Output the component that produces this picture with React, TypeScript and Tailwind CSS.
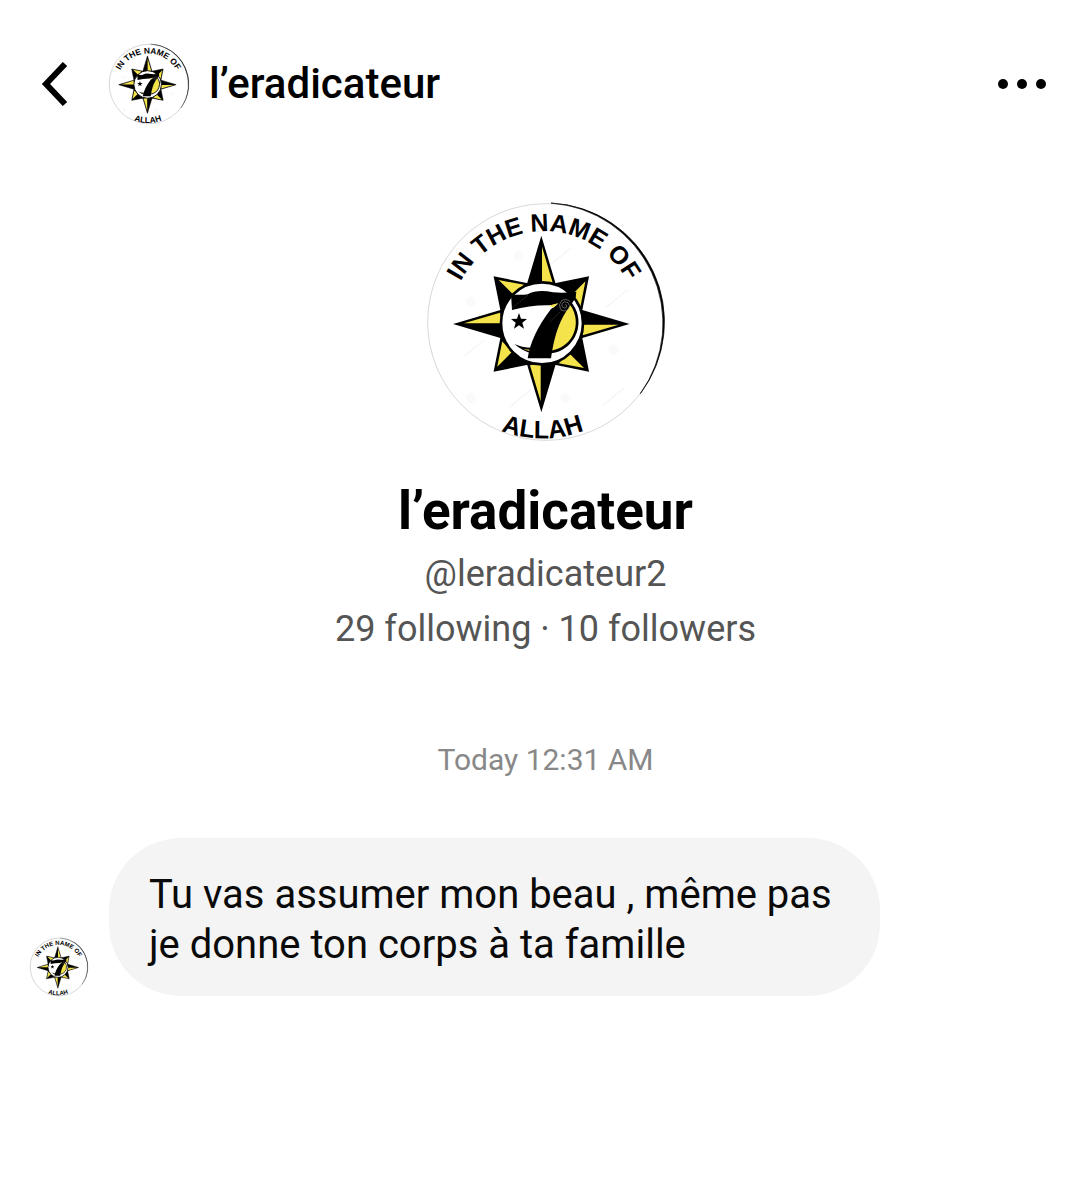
import React, { useId } from 'react';

const CARDINALS = [0, 90, 180, 270];
const DIAGONALS = [45, 135, 225, 315];

const WATERMARKS = [
  [420, 185],
  [160, 460],
  [590, 310],
  [300, 610],
  [580, 605],
];

interface AvatarProps {
  className: string;
}

const Avatar: React.FC<AvatarProps> = ({ className }) => {
  const id = useId();

  return (
    <svg viewBox="20 24 714 714" className={`overflow-visible ${className}`} role="img" aria-label="l’eradicateur">
      <defs>
        <path id={`${id}-top`} d="M88 392 A283 283 0 0 1 654 392" />
        <path id={`${id}-bottom`} d="M21 384 A346 346 0 0 0 713 384" />
      </defs>
      <circle cx="377" cy="381" r="355" fill="#fff" stroke="#d8d8d8" vectorEffect="non-scaling-stroke" />
      {/* Dark rim on the right */}
      <path d="M392 24 A357 357 0 0 1 660 596 A362 362 0 0 0 392 24Z" fill="#000" stroke="#000" strokeWidth="2" />

      {WATERMARKS.map(([x, y]) => (
        <path
          key={`${x}-${y}`}
          d={`M${x - 32} ${y + 26} L${x + 32} ${y - 26}`}
          stroke="#f5f5f5"
          strokeWidth="4"
        />
      ))}
      <g fill="#fafafa">
        <circle cx="295" cy="183" r="15" />
        <circle cx="152" cy="320" r="15" />
        <circle cx="152" cy="610" r="15" />
        <circle cx="435" cy="610" r="15" />
        <circle cx="580" cy="465" r="15" />
      </g>

      {/* Compass star */}
      <g transform="translate(363 387)" stroke="#000" strokeWidth="5">
        {DIAGONALS.map(deg => (
          <g key={deg} transform={`rotate(${deg})`}>
            <path d="M0 -198 L62 -105 L-62 -105Z" />
            <path d="M3 -184 L46 -120 L3 -120Z" fill="#f5e34c" stroke="none" />
          </g>
        ))}
        {CARDINALS.map(deg => (
          <g key={deg} transform={`rotate(${deg})`}>
            <path d="M0 -256 L45 -105 L-45 -105Z" />
            <path d="M2 -232 L34 -124 L2 -118Z" fill="#f5e34c" stroke="none" />
          </g>
        ))}
      </g>
      <circle cx="365" cy="385" r="123" fill="#fff" stroke="#000" strokeWidth="8" />

      {/* Crescent */}
      <path d="M424 322 L446 320 A88 88 0 0 1 394 468 L350 468Z" fill="#f5e34c" />
      <path d="M446 320 A90 90 0 0 1 392 471" fill="none" stroke="#000" strokeWidth="8" />
      <path d="M282 447 Q306 459 340 458 L338 476 Q308 470 282 447Z" />
      <path d="M308 463 L332 464 L330 469Z" fill="#f5e34c" />

      {/* Seven */}
      <path d="M272 296 Q296 302 322 298 Q352 282 398 292 Q432 295 468 290 L466 308 Q450 332 437 350 Q404 400 392 490 L322 490 Q332 420 392 342 L412 328 L386 331 Q330 330 275 345Z" />
      <path d="M386 332 L414 324 L400 338Z" fill="#f5e34c" />
      <path d="M296 354 L302 371 L320 372 L306 383 L311 401 L296 391 L281 401 L286 383 L272 372 L290 371Z" />

      <path
        d="M433 331 q4 -5 7 1 q0 8 -9 7 q-9 -3 -6 -13 q6 -10 18 -3 q9 9 1 20 q-12 10 -24 -1 q-7 -14 4 -25 q14 -8 25 3"
        fill="none"
        stroke="#8a8a8a"
        strokeWidth="2"
      />
      <path d="M277 338 L322 301 M390 380 L424 345" stroke="#555" strokeWidth="2" strokeDasharray="5 4" />

      <g className="font-['Liberation_Sans',Arial,sans-serif] font-bold" fontSize="75" textAnchor="middle">
        <text>
          <textPath href={`#${id}-top`} startOffset="50%">IN THE NAME OF</textPath>
        </text>
        <text>
          <textPath href={`#${id}-bottom`} startOffset="50%">ALLAH</textPath>
        </text>
      </g>
    </svg>
  );
};

const Header: React.FC = () => (
  <header className="flex items-center pt-11 pr-11 pl-10">
    <button type="button" aria-label="Back" className="shrink-0">
      <svg viewBox="0 0 28 44" className="h-11 w-7" fill="none" stroke="#000" strokeWidth="6">
        <path d="M25 2 L6 22 L25 42" />
      </svg>
    </button>
    <Avatar className="ml-[41px] size-20 shrink-0" />
    <h1 className="ml-5 text-[42px] leading-[48px] font-medium">l’eradicateur</h1>
    <button type="button" aria-label="More options" className="ml-auto shrink-0">
      <svg viewBox="0 0 50 12" className="h-3 w-[50px]">
        <circle cx="6" cy="6" r="5" />
        <circle cx="25" cy="6" r="5" />
        <circle cx="44" cy="6" r="5" />
      </svg>
    </button>
  </header>
);

const Profile: React.FC = () => (
  <section className="flex flex-col items-center pt-[79px]">
    <Avatar className="size-[238px]" />
    <h2 className="mt-10 text-[53px] leading-[60px] font-bold">l’eradicateur</h2>
    <p className="mt-[6px] text-[36px] leading-[55px] text-[#555]">@leradicateur2</p>
    <p className="text-[36px] leading-[55px] text-[#555]">29 following · 10 followers</p>
  </section>
);

const App: React.FC = () => (
  <main className="min-h-screen bg-white font-[Roboto,'Liberation_Sans',sans-serif] text-black">
    <Header />
    <Profile />

    <p className="mt-20 text-center text-[30px] leading-[46px] text-[#888]">Today 12:31 AM</p>

    {/* Incoming message */}
    <div className="mt-[55px] flex items-end pr-10 pl-[30px]">
      <Avatar className="size-[58px] shrink-0" />
      <p className="ml-[21px] max-w-[771px] rounded-[72px] bg-[#f4f4f4] px-10 pt-8 pb-[26px] text-[40px] leading-[50px] text-[#0a0a0a]">
        Tu vas assumer mon beau , même pas je donne ton corps à ta famille
      </p>
    </div>
  </main>
);

export default App;
